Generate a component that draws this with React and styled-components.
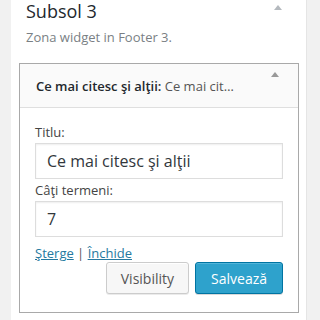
import React from "react";
import styled, { createGlobalStyle } from "styled-components";

const Global = createGlobalStyle`
  html, body { margin: 0; padding: 0; background: #f1f1f1; }
  body { font-family: "Open Sans", "Noto Sans", sans-serif; }
`;

const Page = styled.div`
  width: 320px;
  height: 320px;
  overflow: hidden;
  padding-left: 11px;
  box-sizing: border-box;
`;

const Sidebar = styled.div`
  width: 296px;
  height: 320px;
  background: #fff;
  border-right: 1px solid #e5e5e5;
  box-sizing: border-box;
  padding: 0 8px;
`;

const SidebarHead = styled.div`
  position: relative;
  padding: 0 7px;
  height: 63px;
`;

const SidebarTitle = styled.h3`
  margin: 0;
  font-size: 18px;
  font-weight: 400;
  line-height: 22px;
  color: #23282d;
`;

const Desc = styled.p`
  margin: 6px 0 0;
  font-size: 13px;
  line-height: 18px;
  color: #7a7f84;
`;

const Arrow = styled.span`
  position: absolute;
  top: ${(p) => p.$top}px;
  right: ${(p) => p.$right}px;
  width: 0;
  height: 0;
  border-left: 4px solid transparent;
  border-right: 4px solid transparent;
  border-bottom: 5px solid ${(p) => p.$color};
`;

const Widget = styled.div`
  width: 280px;
  border: 1px solid #a9a9a9;
  box-sizing: border-box;
  background: #fff;
`;

const WidgetTop = styled.div`
  position: relative;
  height: 43px;
  background: #fafafa;
  border-bottom: 1px solid #dfdfdf;
  display: flex;
  align-items: center;
  padding: 0 16px;
  font-size: 13px;
  color: #23282d;
  white-space: nowrap;
`;

const WidgetName = styled.span`
  font-weight: 600;
`;

const InTitle = styled.span`
  font-weight: 400;
  color: #555;
`;

const WidgetBody = styled.div`
  padding: 15px 15px 18px 15px;
  display: flex;
  flex-direction: column;
`;

const Label = styled.label`
  font-size: 13px;
  line-height: 18px;
  color: #444;
  margin-top: ${(p) => p.$mt || 0}px;
`;

const Input = styled.div`
  height: 36px;
  border: 1px solid #ddd;
  box-sizing: border-box;
  margin-top: 2px;
  padding: 0 11px;
  display: flex;
  align-items: center;
  font-size: 16px;
  color: #32373c;
  box-shadow: inset 0 1px 2px rgba(0, 0, 0, 0.07);
`;

const Links = styled.div`
  margin-top: 7px;
  font-size: 13px;
  line-height: 18px;
  color: #555;
`;

const Link = styled.a`
  color: #2579a0;
  text-decoration: underline;
`;

const Buttons = styled.div`
  display: flex;
  justify-content: flex-end;
  gap: 6px;
`;

const Button = styled.button`
  height: 32px;
  padding: 0 ${(p) => p.$px}px;
  border-radius: 3px;
  font-family: "Open Sans", "Noto Sans", sans-serif;
  font-size: 14px;
  border: 1px solid ${(p) => (p.$primary ? "#0074a2" : "#cccccc")};
  background: ${(p) => (p.$primary ? "#2ea2cc" : "#f7f7f7")};
  color: ${(p) => (p.$primary ? "#fff" : "#555")};
  box-shadow: ${(p) =>
    p.$primary
      ? "inset 0 1px 0 rgba(120,200,230,.5), 0 1px 0 rgba(0,0,0,.15)"
      : "inset 0 1px 0 #fff, 0 1px 0 rgba(0,0,0,.08)"};
`;

export default function App() {
  return (
    <Page>
      <Global />
      <Sidebar>
        <SidebarHead>
          <SidebarTitle>Subsol 3</SidebarTitle>
          <Desc>Zona widget in Footer 3.</Desc>
          <Arrow $top={5} $right={16} $color="#b4b9be" />
        </SidebarHead>
        <Widget>
          <WidgetTop>
            <WidgetName>Ce mai citesc şi alţii:</WidgetName>
            <InTitle>&nbsp;Ce mai cit…</InTitle>
            <Arrow $top={8} $right={19} $color="#999" />
          </WidgetTop>
          <WidgetBody>
            <Label>Titlu:</Label>
            <Input>Ce mai citesc şi alţii</Input>
            <Label $mt={2}>Câţi termeni:</Label>
            <Input>7</Input>
            <Links>
              <Link>Şterge</Link> | <Link>Închide</Link>
            </Links>
            <Buttons>
              <Button $px={14}>Visibility</Button>
              <Button $primary $px={15}>Salvează</Button>
            </Buttons>
          </WidgetBody>
        </Widget>
      </Sidebar>
    </Page>
  );
}
